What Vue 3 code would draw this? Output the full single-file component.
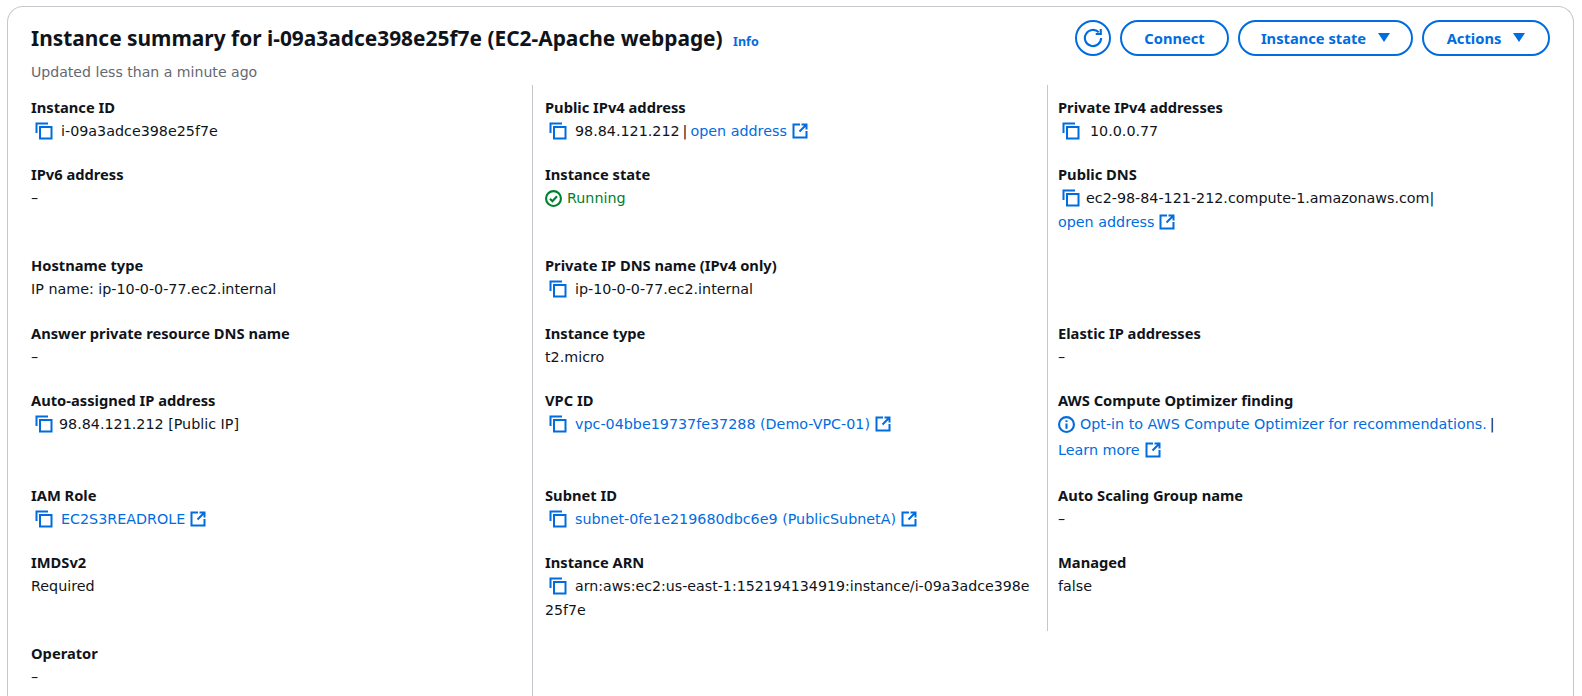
<template>
  <div class="page">
    <svg class="defs" aria-hidden="true">
      <symbol id="i-copy" viewBox="0 0 18 18"><path d="M1.5 11V1.5H13" /><rect x="5" y="5" width="11.5" height="11.5" /></symbol>
      <symbol id="i-ext" viewBox="0 0 16 16"><path d="M14.5 8v6.5h-13v-13H8" /><path d="M9.5 1.5h5v5M14.5 1.5 7.5 8.5" /></symbol>
      <symbol id="i-ok" viewBox="0 0 16 16"><circle cx="8" cy="8" r="7" /><path d="m4.7 8.2 2.3 2.3 4.3-4.6" /></symbol>
      <symbol id="i-info" viewBox="0 0 16 16"><circle cx="8" cy="8" r="7" /><path d="M8 7v5M8 4v1.6" /></symbol>
    </svg>

    <section class="card">
      <header class="head">
        <div class="head-text">
          <h1>Instance summary for i-09a3adce398e25f7e (EC2-Apache webpage) <a class="info">Info</a></h1>
          <p class="updated">Updated less than a minute ago</p>
        </div>
        <div class="actions">
          <button class="btn btn-icon" aria-label="Refresh">
            <svg viewBox="0 0 16 16" class="refresh"><path d="M14.5 8A6.5 6.5 0 1 1 12.6 3.4" /><path d="M14.2 .8v4h-4" /></svg>
          </button>
          <button class="btn connect">Connect</button>
          <button class="btn state">Instance state<span class="caret"></span></button>
          <button class="btn acts">Actions<span class="caret"></span></button>
        </div>
      </header>

      <div class="grid">
        <div v-for="(f, i) in fields" :key="i" class="cell" :class="{ first: i % 3 === 0, bare: f.bare }">
          <template v-if="f.label">
            <div class="label">{{ f.label }}</div>
            <div class="value" :class="[f.cls, { 'has-copy': f.copy }]">
              <svg v-if="f.copy" class="ic copy"><use href="#i-copy" /></svg>
              <svg v-if="f.ok" class="ic ok"><use href="#i-ok" /></svg>
              <svg v-if="f.info" class="ic info-ic"><use href="#i-info" /></svg>
              <span v-if="f.text">{{ f.text }}</span>
              <a v-if="f.link">{{ f.link }}<svg v-if="f.ext" class="ic ext"><use href="#i-ext" /></svg></a>
              <span v-if="f.sep" class="sep">|</span>
              <a v-if="f.after">{{ f.after }}<svg class="ic ext"><use href="#i-ext" /></svg></a>
            </div>
            <div v-if="f.more" class="more" :class="f.moreCls"><a>{{ f.more }}<svg class="ic ext"><use href="#i-ext" /></svg></a></div>
            <div v-if="f.wrap" class="more" :class="f.cls">{{ f.wrap }}</div>
          </template>
        </div>
      </div>
    </section>
  </div>
</template>

<script setup>
const dash = '–'

const fields = [
  { label: 'Instance ID', copy: true, text: 'i-09a3adce398e25f7e' },
  { label: 'Public IPv4 address', copy: true, text: '98.84.121.212', sep: true, after: 'open address' },
  { label: 'Private IPv4 addresses', copy: true, text: '10.0.0.77', cls: 'wide' },

  { label: 'IPv6 address', text: dash },
  { label: 'Instance state', ok: true, text: 'Running', cls: 'green' },
  { label: 'Public DNS', copy: true, text: 'ec2-98-84-121-212.compute-1.amazonaws.com', sep: true, more: 'open address', cls: 'tight nosep' },

  { label: 'Hostname type', text: 'IP name: ip-10-0-0-77.ec2.internal' },
  { label: 'Private IP DNS name (IPv4 only)', copy: true, text: 'ip-10-0-0-77.ec2.internal' },
  {},

  { label: 'Answer private resource DNS name', text: dash },
  { label: 'Instance type', text: 't2.micro' },
  { label: 'Elastic IP addresses', text: dash },

  { label: 'Auto-assigned IP address', copy: true, text: '98.84.121.212 [Public IP]', cls: 'tight' },
  { label: 'VPC ID', copy: true, link: 'vpc-04bbe19737fe37288 (Demo-VPC-01)', ext: true },
  { label: 'AWS Compute Optimizer finding', info: true, link: 'Opt-in to AWS Compute Optimizer for recommendations.', sep: true, more: 'Learn more', moreCls: 'roomy' },

  { label: 'IAM Role', copy: true, link: 'EC2S3READROLE', ext: true },
  { label: 'Subnet ID', copy: true, link: 'subnet-0fe1e219680dbc6e9 (PublicSubnetA)', ext: true },
  { label: 'Auto Scaling Group name', text: dash },

  { label: 'IMDSv2', text: 'Required' },
  { label: 'Instance ARN', copy: true, text: 'arn:aws:ec2:us-east-1:152194134919:instance/i-09a3adce398e', wrap: '25f7e', cls: 'arn' },
  { label: 'Managed', text: 'false' },

  { label: 'Operator', text: dash },
  {},
  { bare: true }
]
</script>

<style>
html,
body {
  margin: 0;
  background: #fff;
  overflow: hidden;
}
</style>

<style scoped>
.page {
  height: 696px;
  overflow: hidden;
  padding: 6px 8px 0 7px;
  box-sizing: border-box;
  font-family: "DejaVu Sans", sans-serif;
  font-size: 14.3px;
  line-height: 22px;
  color: #0f141a;
  background: #fff;
}

.defs {
  position: absolute;
  width: 0;
  height: 0;
}

.card {
  border: 1px solid #c6c6cd;
  border-bottom: 0;
  border-radius: 16px 16px 0 0;
  padding: 0 0 0 23px;
  background: #fff;
}

.head {
  display: flex;
  justify-content: space-between;
  padding: 13px 23px 0 0;
}

h1 {
  margin: 0;
  font-family: "Noto Sans", sans-serif;
  font-size: 20.9px;
  line-height: 36px;
  font-weight: 700;
}

.info {
  margin-left: 5px;
  font-size: 12.5px;
  font-weight: 700;
}

.updated {
  margin: 0;
  font-size: 14.1px;
  color: #656871;
  line-height: 22px;
  padding-top: 1px;
}

.actions {
  display: flex;
  gap: 9px;
  align-items: flex-start;
}

.btn {
  height: 36px;
  box-sizing: border-box;
  border: 2px solid #006ce0;
  border-radius: 18px;
  background: #fff;
  color: #006ce0;
  font: 700 14.7px/20px "Noto Sans", sans-serif;
  padding: 0 0 1px;
  display: flex;
  align-items: center;
  justify-content: center;
}

.btn-icon {
  width: 36px;
  padding: 0;
}

.refresh {
  width: 20px;
  height: 20px;
  fill: none;
  stroke: #006ce0;
  stroke-width: 1.7;
}

.connect {
  width: 109px;
}

.state {
  width: 175px;
}

.acts {
  width: 128px;
}

.caret {
  width: 0;
  height: 0;
  margin-left: 12px;
  border-left: 6px solid transparent;
  border-right: 6px solid transparent;
  border-top: 9px solid #006ce0;
}

.grid {
  display: grid;
  grid-template-columns: 501px 515px 1fr;
  margin-top: 2px;
}

.cell {
  border-left: 1px solid #c6c6cd;
  padding: 10px 0 9.2px 12px;
  min-height: 44px;
}

.cell:nth-child(3n) {
  padding-left: 10px;
}

.cell.first {
  border-left: 0;
  padding-left: 0;
}

.cell.bare {
  border-left: 0;
}

.label {
  font-family: "Noto Sans", sans-serif;
  font-size: 14.7px;
  font-weight: 700;
  line-height: 24px;
}

.value {
  line-height: 23px;
  padding-top: 1px;
}

.value.has-copy .copy {
  margin-left: 4px;
  margin-right: 8px;
}

.value.wide .copy {
  margin-right: 10px;
}

.value.tight .copy {
  margin-right: 6px;
}

.value.nosep .sep {
  margin: 0;
}

.value.arn,
.more.arn {
  font-size: 14.2px;
}

.ic {
  display: inline-block;
  vertical-align: -4px;
  fill: none;
  stroke-width: 2;
}

.copy {
  width: 18px;
  height: 18px;
  stroke: #006ce0;
}

.ext {
  width: 16px;
  height: 16px;
  margin-left: 5px;
  stroke: #006ce0;
  vertical-align: -3px;
}

.ok {
  width: 17px;
  height: 17px;
  margin-right: 5px;
  stroke: #00802f;
  vertical-align: -4px;
}

.info-ic {
  width: 17px;
  height: 17px;
  margin-right: 5px;
  stroke: #006ce0;
  vertical-align: -4px;
}

.green {
  color: #00802f;
}

a {
  color: #006ce0;
  text-decoration: none;
}

.sep {
  margin: 0 3px;
}

.more {
  line-height: 24px;
}

.more.roomy {
  line-height: 28px;
}
</style>
